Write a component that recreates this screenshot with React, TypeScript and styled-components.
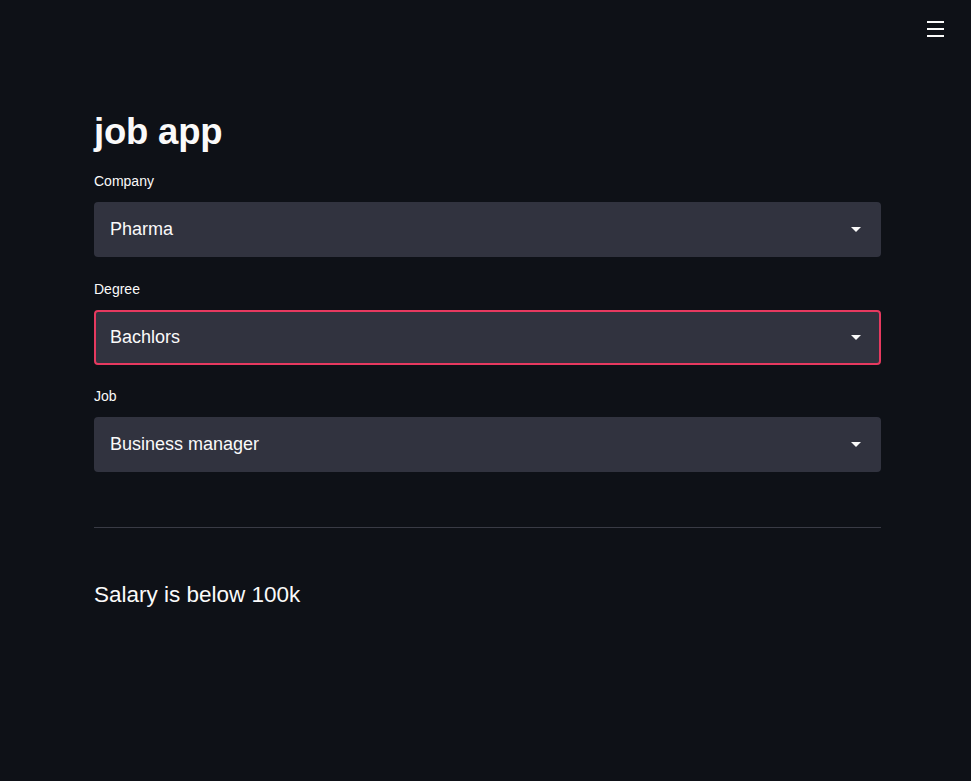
import styled, {createGlobalStyle} from "styled-components";

const GlobalStyle = createGlobalStyle`
    html, body {
        margin: 0;
        padding: 0;
        background-color: #0e1117;
    }
    body {
        font-family: "Liberation Sans", Arial, sans-serif;
        color: #fafafa;
    }
`;

export const Page__Wrapper = styled.div`
    min-height: 781px;
    background-color: #0e1117;
    display: flex;
    flex-direction: column;
`;

export const Header__Bar = styled.header`
    display: flex;
    justify-content: flex-end;
    padding: 21px 27px 0 0;
    height: 37px;
`;

export const Menu__Button = styled.button`
    background: none;
    border: none;
    padding: 0;
    width: 17px;
    height: 16px;
    display: flex;
    flex-direction: column;
    justify-content: space-between;
    cursor: pointer;
    span {
        display: block;
        height: 2px;
        background-color: #fafafa;
    }
`;

export const Main__Container = styled.main`
    width: 787px;
    padding: 52px 0 0 94px;
    display: flex;
    flex-direction: column;
`;

export const Page__Title = styled.h1`
    margin: 0 0 17px;
    font-size: 36.5px;
    font-weight: 700;
    line-height: 44px;
    letter-spacing: -0.2px;
`;

export const Field__Wrapper = styled.div`
    display: flex;
    flex-direction: column;
    margin-bottom: 21.5px;
`;

export const Field__Label = styled.label`
    font-size: 14px;
    line-height: 20px;
    margin-bottom: 11px;
`;

export const Select__Box = styled.div<{$focused?: boolean}>`
    height: 55px;
    box-sizing: border-box;
    background-color: #31333f;
    border-radius: 4px;
    border: 2px solid ${(props) => (props.$focused ? "#e6395f" : "transparent")};
    display: flex;
    align-items: center;
    justify-content: space-between;
    padding: 0 18px 0 14px;
    font-size: 18px;
    color: #fafafa;
`;

export const Divider = styled.hr`
    border: none;
    border-top: 1px solid #393b45;
    margin: 33px 0 0;
`;

export const Result__Text = styled.p`
    margin: 53px 0 0;
    font-size: 22.5px;
    line-height: 28px;
`;

const caret = (
    <svg width="10" height="5" viewBox="0 0 10 5">
        <path d="M0 0h10L5 5z" fill="#fafafa" />
    </svg>
);

const fields = [
    {label: "Company", value: "Pharma"},
    {label: "Degree", value: "Bachlors", focused: true},
    {label: "Job", value: "Business manager"},
];

export default function App() {
    return (
        <>
            <GlobalStyle />
            <Page__Wrapper>
                <Header__Bar>
                    <Menu__Button aria-label="menu">
                        <span />
                        <span />
                        <span />
                    </Menu__Button>
                </Header__Bar>
                <Main__Container>
                    <Page__Title>job app</Page__Title>
                    {fields.map((f) => (
                        <Field__Wrapper key={f.label}>
                            <Field__Label>{f.label}</Field__Label>
                            <Select__Box $focused={f.focused}>
                                <span>{f.value}</span>
                                {caret}
                            </Select__Box>
                        </Field__Wrapper>
                    ))}
                    <Divider />
                    <Result__Text>Salary is below 100k</Result__Text>
                </Main__Container>
            </Page__Wrapper>
        </>
    );
}
